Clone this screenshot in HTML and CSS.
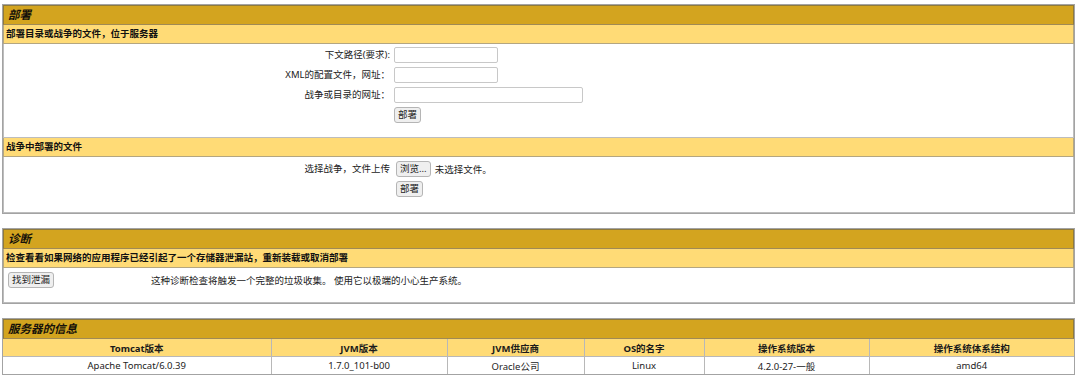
FILE: index.html
```html
<!DOCTYPE html>
<html lang="zh">
<head>
<meta charset="utf-8">
<title>Tomcat Web应用程序管理者</title>
<link rel="stylesheet" href="styles.css">
</head>
<body>
<div class="page">

  <section class="panel">
    <div class="title">部署</div>
    <div class="subhead">部署目录或战争的文件，位于服务器</div>
    <div class="content">
      <div class="form-grid">
        <label class="lbl">下文路径(要求):</label>
        <div><input class="txt w1" type="text"></div>
        <label class="lbl">XML的配置文件，网址：</label>
        <div><input class="txt w1" type="text"></div>
        <label class="lbl">战争或目录的网址：</label>
        <div><input class="txt w2" type="text"></div>
        <span></span>
        <div><button class="btn">部署</button></div>
      </div>
    </div>
    <div class="subhead">战争中部署的文件</div>
    <div class="content content-upload">
      <div class="form-grid upload-grid">
        <label class="lbl">选择战争，文件上传</label>
        <div class="file-row"><button class="btn">浏览...</button><span class="nofile">未选择文件。</span></div>
        <span></span>
        <div><button class="btn">部署</button></div>
      </div>
    </div>
  </section>

  <section class="panel">
    <div class="title">诊断</div>
    <div class="subhead">检查看看如果网络的应用程序已经引起了一个存储器泄漏站，重新装载或取消部署</div>
    <div class="content content-diag">
      <div class="diag-row">
        <div class="diag-btn"><button class="btn">找到泄漏</button></div>
        <div class="diag-text">这种诊断检查将触发一个完整的垃圾收集。 使用它以极端的小心生产系统。</div>
      </div>
    </div>
  </section>

  <section class="panel">
    <div class="title">服务器的信息</div>
    <table class="info">
      <colgroup>
        <col class="c1"><col class="c2"><col class="c3"><col class="c4"><col class="c5"><col class="c6">
      </colgroup>
      <thead>
        <tr><th>Tomcat版本</th><th>JVM版本</th><th>JVM供应商</th><th>OS的名字</th><th>操作系统版本</th><th>操作系统体系结构</th></tr>
      </thead>
      <tbody>
        <tr><td>Apache Tomcat/6.0.39</td><td>1.7.0_101-b00</td><td>Oracle公司</td><td>Linux</td><td>4.2.0-27-一般</td><td>amd64</td></tr>
      </tbody>
    </table>
  </section>

</div>
</body>
</html>
```
FILE: styles.css
```css
html, body {
  margin: 0;
  padding: 0;
  background: #ffffff;
}
body {
  font-family: "Noto Sans", "Noto Sans CJK SC", sans-serif;
  font-size: 9.5px;
  color: #1a1a1a;
}
.page {
  padding: 4px 5px 0 2px;
  display: flex;
  flex-direction: column;
  gap: 14px;
}
.panel {
  border: 1px solid #a3a3a3;
  display: flex;
  flex-direction: column;
}
.title {
  background: #d3a41f;
  border: 1px solid #8f7a3c;
  border-bottom-color: #a08a55;
  height: 18px;
  line-height: 18px;
  padding-left: 4px;
  font-size: 11.5px;
  font-weight: bold;
  font-style: italic;
  color: #15110a;
}
.subhead {
  background: #ffdb76;
  border: 1px solid #b4a680;
  border-top: none;
  height: 18px;
  line-height: 18px;
  padding-left: 2px;
  font-weight: bold;
  color: #111;
}
.content {
  border: 1px solid #bdbdbd;
  border-top: none;
  background: #fff;
  height: 90px;
  padding-top: 3px;
}
.content-upload {
  height: 51px;
  padding-top: 4px;
}
.content-diag {
  height: 30px;
  padding-top: 4px;
}
.form-grid {
  display: grid;
  grid-template-columns: 386px 1fr;
  column-gap: 4px;
  row-gap: 4px;
  align-items: center;
}
.upload-grid {
  column-gap: 6px;
  row-gap: 4px;
}
.lbl {
  text-align: right;
  color: #222;
  line-height: 16px;
}
.txt {
  box-sizing: border-box;
  height: 16px;
  border: 1px solid #c8c8c8;
  border-radius: 2px;
  margin: 0;
  padding: 0 2px;
  display: block;
  font-size: 9.5px;
}
.w1 { width: 104px; }
.w2 { width: 189px; }
.btn {
  box-sizing: border-box;
  height: 16px;
  font-family: "Noto Sans", "Noto Sans CJK SC", sans-serif;
  font-size: 9.5px;
  line-height: 14px;
  padding: 0 3px;
  background: #efefef;
  border: 1px solid #b5b5b5;
  border-radius: 3px;
  color: #222;
  margin: 0;
  display: block;
}
.file-row {
  display: flex;
  align-items: center;
  gap: 4px;
}
.nofile { color: #222; }
.diag-row {
  display: flex;
  align-items: center;
}
.diag-btn {
  width: 143px;
  padding-left: 4px;
}
.diag-text {
  color: #222;
}
.info {
  border-collapse: collapse;
  width: 100%;
  table-layout: fixed;
}
.info th, .info td {
  border: 1px solid #b8b8b8;
  text-align: center;
  height: 17px;
  padding: 0;
  font-size: 9.5px;
}
.info tr > :first-child { border-left: none; }
.info tr > :last-child { border-right: none; }
.info tbody td { border-bottom: none; }
.info th {
  background: #ffdb76;
  font-weight: bold;
  border-top: none;
}
.info td { color: #222; }
.c1 { width: 268px; }
.c2 { width: 176px; }
.c3 { width: 137px; }
.c4 { width: 120px; }
.c5 { width: 165px; }
.c6 { width: auto; }
```
